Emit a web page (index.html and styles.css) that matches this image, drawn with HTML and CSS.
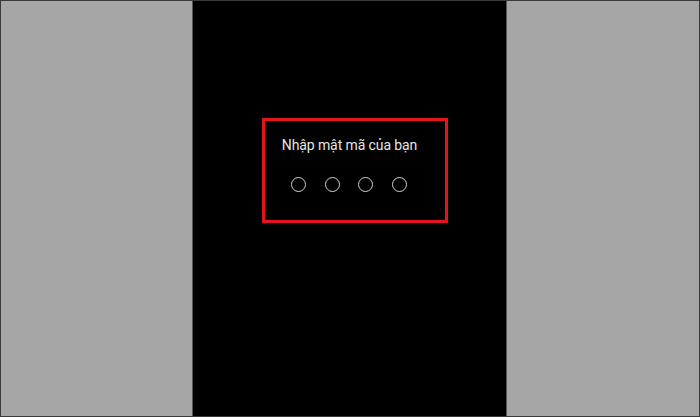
FILE: index.html
```html
<!DOCTYPE html>
<html lang="vi">
<head>
<meta charset="utf-8">
<link rel="stylesheet" href="styles.css">
</head>
<body>
<div class="frame">
  <div class="side side-left"></div>
  <div class="phone">
    <div class="highlight">
      <div class="prompt">Nhập mật mã của bạn</div>
      <div class="dots">
        <span class="dot"></span>
        <span class="dot"></span>
        <span class="dot"></span>
        <span class="dot"></span>
      </div>
    </div>
  </div>
  <div class="side side-right"></div>
</div>
</body>
</html>
```

FILE: styles.css
```css
html, body {
  margin: 0;
  padding: 0;
  background: #a6a6a6;
}
.frame {
  width: 700px;
  height: 417px;
  box-sizing: border-box;
  border: 1px solid #3a3a3a;
  display: flex;
  overflow: hidden;
}
.side {
  background: #a6a6a6;
}
.side-left {
  width: 191px;
  border-right: 1px solid #555;
}
.side-right {
  flex: 1;
  border-left: 1px solid #555;
}
.phone {
  width: 313px;
  background: #000;
  padding: 117px 0 0 69px;
  box-sizing: border-box;
}
.highlight {
  width: 186px;
  height: 105px;
  box-sizing: border-box;
  border: 3px solid #e3141c;
  display: flex;
  flex-direction: column;
  align-items: center;
  padding: 15px 0 0 0;
}
.prompt {
  font-family: Roboto, "Liberation Sans", Arial, sans-serif;
  font-size: 14px;
  line-height: 18px;
  color: #e6e6e6;
  margin-left: -11px;
  letter-spacing: -0.1px;
}
.dots {
  display: flex;
  gap: 18.5px;
  margin-top: 23px;
  margin-left: -12px;
}
.dot {
  width: 13px;
  height: 13px;
  border: 1.5px solid #d0d0d0;
  border-radius: 50%;
}
```
